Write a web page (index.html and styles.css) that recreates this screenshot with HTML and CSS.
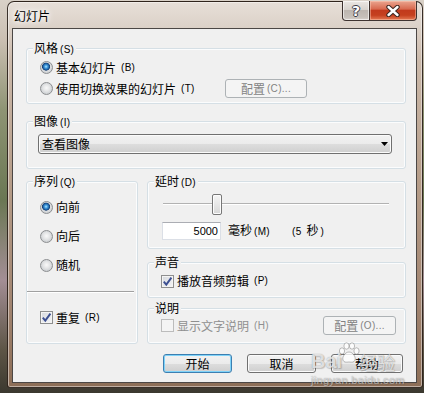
FILE: index.html
```html
<!DOCTYPE html>
<html lang="zh-CN">
<head>
<meta charset="utf-8">
<title>幻灯片</title>
<link rel="stylesheet" href="styles.css">
</head>
<body>
<div class="desktop">
  <div class="window">
    <div class="titlebar">
      <span class="title">幻灯片</span>
      <div class="caption">
        <div class="cap help">?</div>
        <div class="cap close">
          <svg width="14" height="12" viewBox="0 0 14 12"><path d="M2.5 2 L11.5 10 M11.5 2 L2.5 10" stroke="#3b2620" stroke-width="4.4" stroke-linecap="round" fill="none"/><path d="M2.5 2 L11.5 10 M11.5 2 L2.5 10" stroke="#fff" stroke-width="2.4" stroke-linecap="round" fill="none"/></svg>
        </div>
      </div>
    </div>
    <div class="client">
      <div class="group g-style">
        <div class="legend">风格<span class="acc">(S)</span></div>
        <div class="style-grid">
          <div class="opt"><span class="radio checked"></span>基本幻灯片<span class="acc">(B)</span></div>
          <span></span>
          <div class="opt"><span class="radio"></span>使用切换效果的幻灯片<span class="acc">(T)</span></div>
          <div class="btn disabled">配置<span class="acc">(C)...</span></div>
        </div>
      </div>

      <div class="group g-image">
        <div class="legend">图像<span class="acc">(I)</span></div>
        <div class="combo">
          <span>查看图像</span>
          <svg class="arrow" width="7" height="4" viewBox="0 0 7 4"><path d="M0 0 H7 L3.5 4 Z" fill="#000"/></svg>
        </div>
      </div>

      <div class="lower">
        <div class="group g-seq">
          <div class="legend">序列<span class="acc">(Q)</span></div>
          <div class="seq-body">
            <div class="opt row14"><span class="radio checked"></span>向前</div>
            <div class="opt row14"><span class="radio"></span>向后</div>
            <div class="opt row14"><span class="radio"></span>随机</div>
            <div class="separator"></div>
            <div class="opt repeat"><span class="check on"><svg width="11" height="11" viewBox="0 0 11 11"><path d="M1.8 5.6 L4.3 8.6 L9.4 1.6" stroke="#3c4f91" stroke-width="1.9" fill="none"/></svg></span>重复<span class="acc">(R)</span></div>
          </div>
        </div>

        <div class="right-col">
          <div class="group g-delay">
            <div class="legend">延时<span class="acc">(D)</span></div>
            <div class="delay-body">
              <div class="slider"><span class="thumb"></span></div>
              <div class="delay-row">
                <span class="input">5000</span>
                <span class="unit">毫秒<span class="acc">(M)</span></span>
                <span class="secs"><span class="acc">(5 </span>秒<span class="acc">)</span></span>
              </div>
            </div>
          </div>

          <div class="group g-sound">
            <div class="legend">声音</div>
            <div class="sound-body">
              <div class="opt"><span class="check on"><svg width="11" height="11" viewBox="0 0 11 11"><path d="M1.8 5.6 L4.3 8.6 L9.4 1.6" stroke="#3c4f91" stroke-width="1.9" fill="none"/></svg></span>播放音频剪辑<span class="acc">(P)</span></div>
            </div>
          </div>

          <div class="group g-caption">
            <div class="legend">说明</div>
            <div class="caption-body">
              <div class="opt dim"><span class="check off"></span>显示文字说明<span class="acc">(H)</span></div>
              <div class="btn disabled small">配置<span class="acc">(O)...</span></div>
            </div>
          </div>
        </div>
      </div>

      <div class="actions">
        <div class="btn default">开始</div>
        <div class="btn">取消</div>
        <div class="btn wide">帮助</div>
      </div>
    </div>
  </div>

  <div class="watermark">
    <div class="wm-top">
      <span class="wm-bai">Bai</span>
      <svg class="paw" width="24" height="22" viewBox="0 0 24 22"><g fill="rgba(255,255,255,.8)" stroke="rgba(90,90,90,.4)" stroke-width="1"><ellipse cx="5" cy="9" rx="2.6" ry="3.2"/><ellipse cx="9.5" cy="4" rx="2.6" ry="3.2"/><ellipse cx="15" cy="4" rx="2.6" ry="3.2"/><ellipse cx="19.5" cy="9" rx="2.6" ry="3.2"/><path d="M12 10 C8 10 5 15 6 18 C7 21 10 20 12 20 C14 20 17 21 18 18 C19 15 16 10 12 10 Z"/></g></svg>
      <span class="wm-jy">经验</span>
    </div>
    <div class="wm-url">jingyan.baidu.com</div>
  </div>
</div>
</body>
</html>
```

FILE: styles.css
```css
* { box-sizing: border-box; margin: 0; padding: 0; }

html, body { width: 424px; height: 393px; overflow: hidden; }

body {
  font-family: "Noto Sans CJK SC", "Noto Sans", sans-serif;
  font-size: 12px;
  line-height: 14px;
  color: #000;
  background: linear-gradient(to bottom, #d9d1c8 0, #cbbfb2 40px, #8e9474 110px, #6a7753 200px, #a38e95 280px, #5d5546 350px, #3b382f 393px);
}

.desktop {
  position: relative;
  height: 393px;
  padding: 1px 1px 5px 7px;
}

.window {
  width: 416px;
  height: 387px;
  display: flex;
  flex-direction: column;
  padding: 0 5px 4px 4px;
  border: 1px solid rgba(38, 28, 22, 0.9);
  border-radius: 7px 7px 3px 3px;
  background: linear-gradient(to bottom, #e7dfd8 0, #ddd3ca 22px, #cbb9aa 60px, #b69d89 180px, #a28571 300px, #8c6d56 387px);
  box-shadow: inset 0 0 0 1px rgba(255, 255, 255, 0.45);
}

/* title bar */
.titlebar {
  flex: none;
  height: 26px;
  display: flex;
  align-items: flex-start;
}

.title {
  margin: 7px 0 0 2px;
  font-size: 12px;
  line-height: 14px;
  color: #000;
  text-shadow: 0 0 4px #fff, 0 0 7px #fff, 0 0 10px rgba(255, 255, 255, 0.9);
}

.caption {
  margin: -1px 0 0 auto;
  display: flex;
}

.cap {
  height: 20px;
  display: flex;
  align-items: center;
  justify-content: center;
  border: 1px solid #3e3330;
  border-top: none;
}

.help {
  width: 28px;
  border-radius: 0 0 0 4px;
  background: linear-gradient(to bottom, #ebe7e3 0, #d8d3ce 45%, #bdb6b0 50%, #c6c0ba 85%, #d9d3ce 100%);
  box-shadow: inset 0 0 0 1px rgba(255, 255, 255, 0.6);
  font-family: "DejaVu Sans", sans-serif;
  font-weight: bold;
  font-size: 14px;
  color: #fff;
  text-shadow: 1px 0 0 #3b3b45, -1px 0 0 #3b3b45, 0 1px 0 #3b3b45, 0 -1px 0 #3b3b45;
}

.close {
  width: 47px;
  border-left: none;
  border-radius: 0 0 4px 0;
  background: linear-gradient(to bottom, #eaa58f 0, #d86a50 42%, #c23a1d 50%, #c5401f 75%, #e57954 100%);
  box-shadow: inset 0 0 0 1px rgba(255, 210, 190, 0.45);
}

/* client area */
.client {
  flex: none;
  height: 355px;
  border: 1px solid #4b4745;
  background: #f0f0f0;
  padding: 19px 10px 0 13px;
}

.acc {
  font-family: "Liberation Sans", sans-serif;
  font-size: 10px;
  margin-left: 2px;
  letter-spacing: 0.3px;
}

.group {
  border: 1px solid #d5dfe5;
  border-radius: 3px;
  box-shadow: inset 0 0 0 1px #fbfcfd;
}

.legend {
  width: max-content;
  height: 14px;
  line-height: 14px;
  margin: -8px 0 0 6px;
  padding: 0 2px 0 1px;
  background: #f0f0f0;
}

.opt {
  display: flex;
  align-items: center;
  gap: 3px;
  white-space: nowrap;
}

.radio {
  flex: none;
  width: 13px;
  height: 13px;
  border-radius: 50%;
  border: 1px solid #8c8e90;
  background: radial-gradient(circle at 50% 45%, #f9f9f9 0, #e6e7e8 3px, #cdd0d3 6px);
}

.radio.checked {
  background:
    radial-gradient(circle at 46% 42%, #b6e8ff 0, #49a3e2 1.4px, #1c60a6 3px, #173f6f 3.7px, rgba(0, 0, 0, 0) 4.3px),
    radial-gradient(circle at 50% 45%, #f9f9f9 0, #e6e7e8 3px, #cdd0d3 6px);
}

.check {
  flex: none;
  width: 13px;
  height: 13px;
  display: flex;
  align-items: center;
  justify-content: center;
  border: 1px solid #8e8f8f;
  background: linear-gradient(135deg, #d6d9de 0, #f4f5f6 100%);
  box-shadow: inset 0 0 0 1px #f4f4f4;
}

.check.off {
  border-color: #bcbcbc;
  background: #f4f4f4;
  box-shadow: none;
}

.dim { color: #8f8f8f; }

.btn {
  height: 19px;
  display: flex;
  align-items: center;
  justify-content: center;
  border: 1px solid #707070;
  border-radius: 3px;
  background: linear-gradient(to bottom, #f2f2f2 0, #ebebeb 50%, #dddddd 51%, #cfcfcf 100%);
  box-shadow: inset 0 0 0 1px #fbfbfb;
  white-space: nowrap;
}

.btn.disabled {
  border-color: #adb2b5;
  background: #f4f4f4;
  box-shadow: none;
  color: #838383;
}

.btn.default {
  border-color: #3c7fb1;
  box-shadow: inset 0 0 0 1px #7fd3f9;
}

/* style group */
.g-style { height: 56px; }

.style-grid {
  margin-top: 2px;
  padding-left: 13px;
  display: grid;
  grid-template-columns: 185px 82px;
  grid-auto-rows: 21px;
  align-items: center;
}

/* image group */
.g-image {
  height: 48px;
  margin-top: 17px;
}

.combo {
  height: 20px;
  margin: 6px 13px 0 11px;
  padding: 0 3px;
  display: flex;
  align-items: center;
  justify-content: space-between;
  border: 1px solid #707070;
  border-radius: 3px;
  background: linear-gradient(to bottom, #f2f2f2 0, #ebebeb 50%, #dddddd 51%, #cfcfcf 100%);
  box-shadow: inset 0 0 0 1px #fbfbfb;
}

/* lower area */
.lower {
  margin-top: 12px;
  display: grid;
  grid-template-columns: 112px 259px;
  column-gap: 9px;
}

.g-seq { height: 163px; }

.seq-body {
  padding-left: 13px;
  padding-top: 12px;
  display: flex;
  flex-direction: column;
}

.row14 { height: 14px; }
.row14 + .row14 { margin-top: 15px; }

.separator {
  height: 2px;
  margin: 19px 3px 0 -13px;
  border-top: 1px solid #a0a0a0;
  border-bottom: 1px solid #ffffff;
}

.repeat {
  height: 13px;
  margin-top: 18px;
}

.right-col {
  display: flex;
  flex-direction: column;
}

.g-delay { height: 68px; }

.delay-body { padding-left: 15px; }

.slider {
  width: 226px;
  height: 21px;
  margin-top: 6px;
  background: linear-gradient(to bottom, rgba(0,0,0,0) 9px, #b2b2b2 9px, #b2b2b2 10px, #ffffff 10px, #ffffff 11px, rgba(0,0,0,0) 11px);
}

.thumb {
  display: block;
  width: 10px;
  height: 21px;
  margin-left: 49px;
  border: 1px solid #777;
  border-radius: 2px;
  background: linear-gradient(to bottom, #f5f5f5 0, #e7e7e7 50%, #d7d7d7 100%);
  box-shadow: inset 0 0 0 1px #fcfcfc;
}

.delay-row {
  margin-top: 7px;
  display: flex;
  align-items: center;
}

.input {
  width: 59px;
  height: 18px;
  margin-left: -1px;
  padding-right: 2px;
  text-align: right;
  font-family: "Liberation Sans", sans-serif;
  font-size: 11px;
  line-height: 16px;
  background: #fff;
  border: 1px solid #dbdfe6;
  border-top-color: #abadb3;
}

.unit {
  width: 64px;
  margin-left: 7px;
}

.secs { white-space: nowrap; }
.secs .acc:first-child { margin-left: 0; margin-right: 2px; }

.g-sound {
  height: 36px;
  margin-top: 13px;
}

.sound-body {
  padding: 5px 0 0 13px;
}

.g-caption {
  height: 36px;
  margin-top: 10px;
}

.caption-body {
  height: 19px;
  margin-top: 1px;
  padding: 0 9px 0 13px;
  display: flex;
  align-items: center;
  justify-content: space-between;
}

.btn.small { width: 73px; }

/* action buttons */
.actions {
  margin-top: 10px;
  margin-right: 3px;
  display: flex;
  justify-content: flex-end;
  gap: 15px;
}

.actions .btn { width: 69px; }
.actions .btn.wide { width: 72px; }

/* watermark overlay */
.watermark {
  position: absolute;
  left: 311px;
  top: 342px;
  pointer-events: none;
  color: rgba(255, 255, 255, 0.72);
  text-shadow: 0 0 1px rgba(60, 60, 60, 0.5), 1px 1px 1px rgba(80, 80, 80, 0.25);
}

.wm-top {
  display: flex;
  align-items: flex-end;
}

.wm-bai {
  font-family: "Liberation Sans", sans-serif;
  font-weight: bold;
  font-size: 20px;
  line-height: 20px;
  margin-bottom: -4px;
}

.paw { margin: 0 -2px 3px -5px; }

.wm-jy {
  font-size: 18px;
  line-height: 20px;
  margin-bottom: -5px;
}

.wm-url {
  margin-top: 8px;
  font-family: "Liberation Sans", sans-serif;
  font-size: 11px;
  line-height: 10px;
  letter-spacing: 0.3px;
  color: rgba(255, 255, 255, 0.5);
}
```
